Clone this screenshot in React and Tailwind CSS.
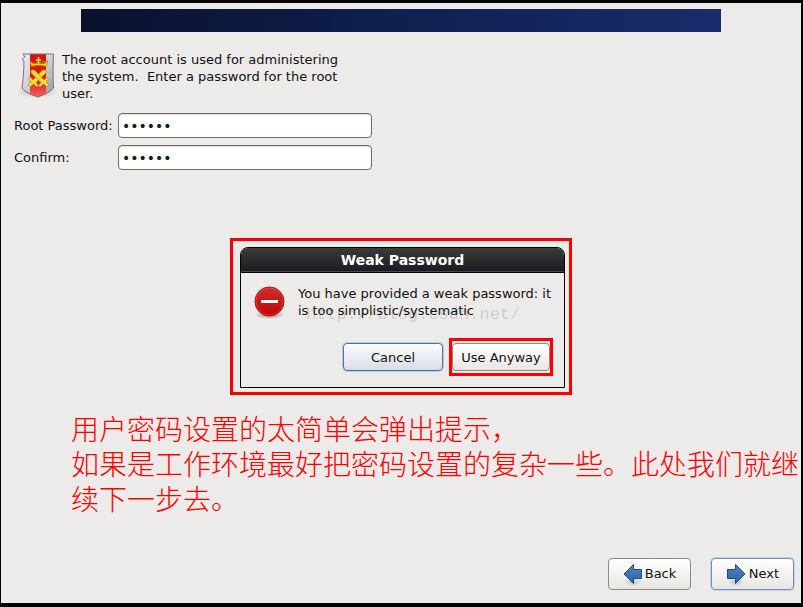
import React from 'react';

function ShieldIcon() {
  return (
    <svg className="h-12 w-10 shrink-0" viewBox="0 0 40 48" aria-hidden="true">
      <defs>
        <linearGradient id="steel" x1="0" y1="0" x2="1" y2="1">
          <stop offset="0" stopColor="#f4f4f6" />
          <stop offset="0.5" stopColor="#cfcdd2" />
          <stop offset="1" stopColor="#8e8a93" />
        </linearGradient>
        <linearGradient id="ribbon" x1="0" y1="0" x2="0" y2="1">
          <stop offset="0" stopColor="#d60e12" />
          <stop offset="0.6" stopColor="#e01c20" />
          <stop offset="1" stopColor="#f4686a" />
        </linearGradient>
        <radialGradient id="shieldShade">
          <stop offset="0" stopColor="#777" stopOpacity="0.6" />
          <stop offset="1" stopColor="#777" stopOpacity="0" />
        </radialGradient>
        <clipPath id="shieldClip">
          <path d="M5 3 H35.500 C35 14 35 28 35.500 37 C31 42 25 44 20 46 C14 44 8 42 4 37 C5 29 6 19 6 10 L4 8 L7 6 Z" />
        </clipPath>
      </defs>
      <ellipse cx="19" cy="40" rx="20" ry="7" fill="url(#shieldShade)" />
      <g clipPath="url(#shieldClip)">
        <rect width="40" height="48" fill="url(#steel)" />
        <rect x="12" width="16" height="48" fill="url(#ribbon)" />
      </g>
      <path d="M5 3 H35.500 C35 14 35 28 35.500 37 C31 42 25 44 20 46 C14 44 8 42 4 37 C5 29 6 19 6 10 L4 8 L7 6 Z" fill="none" stroke="#77747a" strokeWidth="1" />
      <path d="M12 10 L15 12.500 L29.500 10 L28.500 15.500 Q20.500 13 13.500 15.500 Z M15 12.500 H26 L29.500 10 Z" fill="#f2d21b" stroke="#a78a00" strokeWidth="0.6" />
      <path d="M20.500 6 V13 M18 9 H23" stroke="#f7dc30" strokeWidth="1.6" />
      <g fill="#f5dc3c" stroke="#a58400" strokeWidth="0.6">
        <path d="M28 19 L24.500 19 L15 29 L12.500 26 L10.500 28 L13 31 L10 34 L12 36 L15.500 33 L19 36 L20.500 34.500 L18 31.500 L28 22 Z" />
        <path d="M13 19 L16.500 19 L26 29 L28.500 26 L30.500 28 L28 31 L31 34 L29 36 L25.500 33 L22 36 L20.500 34.500 L23 31.500 L13 22 Z" />
      </g>
    </svg>
  );
}

function ErrorIcon() {
  return (
    <svg className="h-9 w-9 shrink-0" viewBox="0 0 36 36" aria-hidden="true">
      <defs>
        <linearGradient id="alertRed" x1="0" y1="0" x2="0" y2="1">
          <stop offset="0" stopColor="#d62b2b" />
          <stop offset="0.5" stopColor="#c61a1a" />
          <stop offset="1" stopColor="#c80303" />
        </linearGradient>
        <radialGradient id="alertShade">
          <stop offset="0" stopColor="#555" stopOpacity="0.7" />
          <stop offset="1" stopColor="#555" stopOpacity="0" />
        </radialGradient>
      </defs>
      <ellipse cx="17.500" cy="30" rx="15" ry="4" fill="url(#alertShade)" />
      <circle cx="17.500" cy="16.500" r="14.500" fill="url(#alertRed)" stroke="#b30d0d" />
      <circle cx="17.500" cy="16.500" r="13.500" fill="none" stroke="#e05050" strokeWidth="0.6" />
      <rect x="9" y="15" width="17" height="3" fill="#fff" />
    </svg>
  );
}

function ArrowIcon({ flipped }) {
  return (
    <svg className="h-6 w-5 shrink-0" viewBox="0 0 20 24" aria-hidden="true">
      <defs>
        <linearGradient id="arrowBlue" x1="0" y1="0" x2="0" y2="1">
          <stop offset="0" stopColor="#5583bd" />
          <stop offset="1" stopColor="#2d62a8" />
        </linearGradient>
        <radialGradient id="arrowShade">
          <stop offset="0" stopColor="#777" stopOpacity="0.4" />
          <stop offset="1" stopColor="#777" stopOpacity="0" />
        </radialGradient>
      </defs>
      <ellipse cx="10" cy="20" rx="9" ry="4" fill="url(#arrowShade)" />
      <path
        d={flipped ? 'M1 12 L10.500 2.500 V7.500 H18.500 V16.500 H10.500 V21.500 Z' : 'M19 12 L9.500 2.500 V7.500 H1.500 V16.500 H9.500 V21.500 Z'}
        fill="url(#arrowBlue)"
        stroke="#204a87"
        strokeLinejoin="round"
      />
    </svg>
  );
}

function PasswordRow({ id, label }) {
  return (
    <div className="flex h-[25px] items-center">
      <label htmlFor={id} className="w-[104px] shrink-0">{label}</label>
      <input
        id={id}
        type="password"
        defaultValue="secret"
        className="h-[25px] w-[254px] rounded-[4px] border border-[#6f6d6a] bg-white px-[3px] font-['DejaVu_Sans',sans-serif] text-[14px] text-[#1a1a1a] shadow-[inset_0_1px_0_#dddbd8] outline-none"
      />
    </div>
  );
}

function WeakPasswordDialog() {
  return (
    <div className="mx-auto mt-[68px] w-[342px] border-[3px] border-[#ff0000] pt-[6px] pr-[4px] pb-[4px] pl-[7px]">
      <section role="dialog" aria-labelledby="dialog-title" className="h-[141px] rounded-t-[8px] border border-black">
        <h1
          id="dialog-title"
          className="h-[25px] rounded-t-[7px] border-b border-black bg-linear-to-b from-[#3b3b3b] via-[#2b2b2b] to-[#1b1b1b] text-center text-[14px] leading-[24px] font-bold text-white shadow-[inset_0_-1px_0_#384a78]"
        >
          Weak Password
        </h1>
        <div className="relative flex gap-[10px] pt-[12px] pl-[11px]">
          <ErrorIcon />
          <p className="w-[260px]">You have provided a weak password: it is too simplistic/systematic</p>
          <span className="pointer-events-none absolute top-[31px] left-[65px] font-['Liberation_Mono',monospace] text-[17px] leading-[22px] text-black/15">
            http://blog.csdn.net/
          </span>
        </div>
        <div className="mt-[17px] flex justify-end gap-[6px] pr-[11px]">
          <button className="my-[5px] h-[28px] w-[100px] rounded-[4px] border border-[#4d73a6] bg-linear-to-b from-[#fbfcff] to-[#d8dde5] shadow-[0_0_0_1px_#b9cbe2]">
            Cancel
          </button>
          <div className="border-[3px] border-[#ff0000] py-[2px]">
            <button className="h-[28px] w-[98px] rounded-[4px] border border-[#8e8b87] bg-linear-to-b from-white to-[#e8e6e3]">
              Use Anyway
            </button>
          </div>
        </div>
      </section>
    </div>
  );
}

export default function App() {
  return (
    <main className="flex min-h-screen flex-col border-t-[3px] border-r-2 border-b-4 border-l border-black bg-[#edebe9] font-['DejaVu_Sans',sans-serif] text-[13px] leading-[17px] text-[#111]">
      <header className="mx-[80px] mt-[6px] h-[23px] bg-linear-to-r from-[#09112c] via-[#0f2050] to-[#182c6c]" />
      <div className="mt-[19px] flex gap-1 pl-[17px]">
        <ShieldIcon />
        <p className="w-[290px] whitespace-pre-wrap">
          The root account is used for administering the system.{'  '}Enter a password for the root user.
        </p>
      </div>
      <form className="mt-[11px] flex flex-col gap-[7px] pl-[13px]">
        <PasswordRow id="root-password" label="Root Password:" />
        <PasswordRow id="confirm" label="Confirm:" />
      </form>
      <WeakPasswordDialog />
      <p className="mt-[16px] pl-[70px] font-['Noto_Sans_CJK_SC',sans-serif] text-[28px] leading-[35px] font-light text-[#ff0000]">
        用户密码设置的太简单会弹出提示，
        <br />
        如果是工作环境最好把密码设置的复杂一些。此处我们就继续下一步去。
      </p>
      <footer className="mt-auto flex justify-end gap-[20px] pr-[7px] pb-[13px]">
        <button className="flex h-[32px] w-[83px] items-center justify-center gap-[2px] rounded-[4px] border border-[#8e8b87] bg-linear-to-b from-white to-[#e8e6e3] pb-px">
          <ArrowIcon flipped />
          Back
        </button>
        <button className="flex h-[32px] w-[83px] items-center justify-center gap-[3px] rounded-[4px] border border-[#6d8fc0] bg-linear-to-b from-white to-[#e8e6e3] pb-px shadow-[0_0_0_1px_#c5d3e6]">
          <ArrowIcon />
          Next
        </button>
      </footer>
    </main>
  );
}
